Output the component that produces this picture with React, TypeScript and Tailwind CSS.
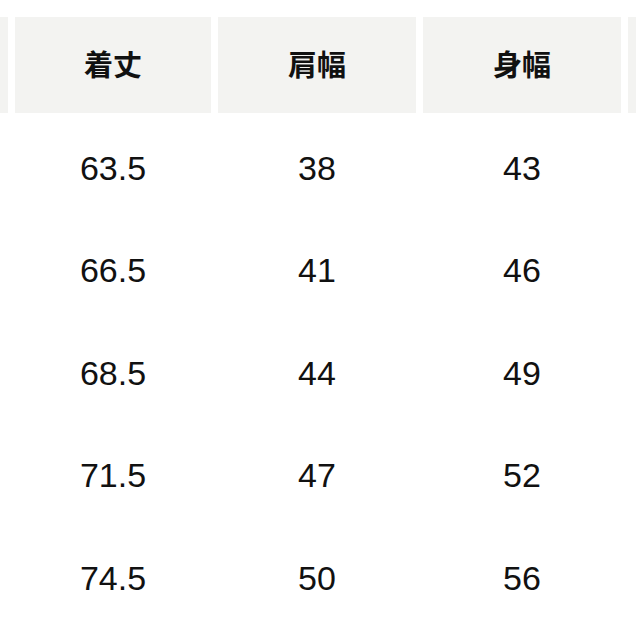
const HEADERS = ['着丈', '肩幅', '身幅'];
const ROWS = [
  ['63.5', '38', '43'],
  ['66.5', '41', '46'],
  ['68.5', '44', '49'],
  ['71.5', '47', '52'],
  ['74.5', '50', '56'],
];

export default function App() {
  return (
    <div className="h-[636px] w-[636px] overflow-hidden bg-white pt-[17px] text-[#111]">
      {/* header */}
      <div className="grid h-[96px] grid-cols-[8px_196px_198px_198px_1fr] gap-[7px]">
        <div className="bg-[#f3f3f1]" />
        {HEADERS.map((h) => (
          <div
            key={h}
            className="flex items-center justify-center bg-[#f3f3f1] pb-[2px] text-[29px] font-bold [font-family:'Noto_Sans_CJK_JP',sans-serif]"
          >
            {h}
          </div>
        ))}
        <div className="bg-[#f3f3f1]" />
      </div>

      {/* rows */}
      <div className="mt-[4px]">
        {ROWS.map((r, i) => (
          <div key={i} className="grid h-[102.5px] grid-cols-[8px_196px_198px_198px_1fr] gap-[7px]">
            <div />
            {r.map((v, j) => (
              <div
                key={j}
                className="flex items-center justify-center text-[34px] [font-family:'Liberation_Sans',Arial,sans-serif]"
              >
                {v}
              </div>
            ))}
            <div />
          </div>
        ))}
      </div>
    </div>
  );
}
